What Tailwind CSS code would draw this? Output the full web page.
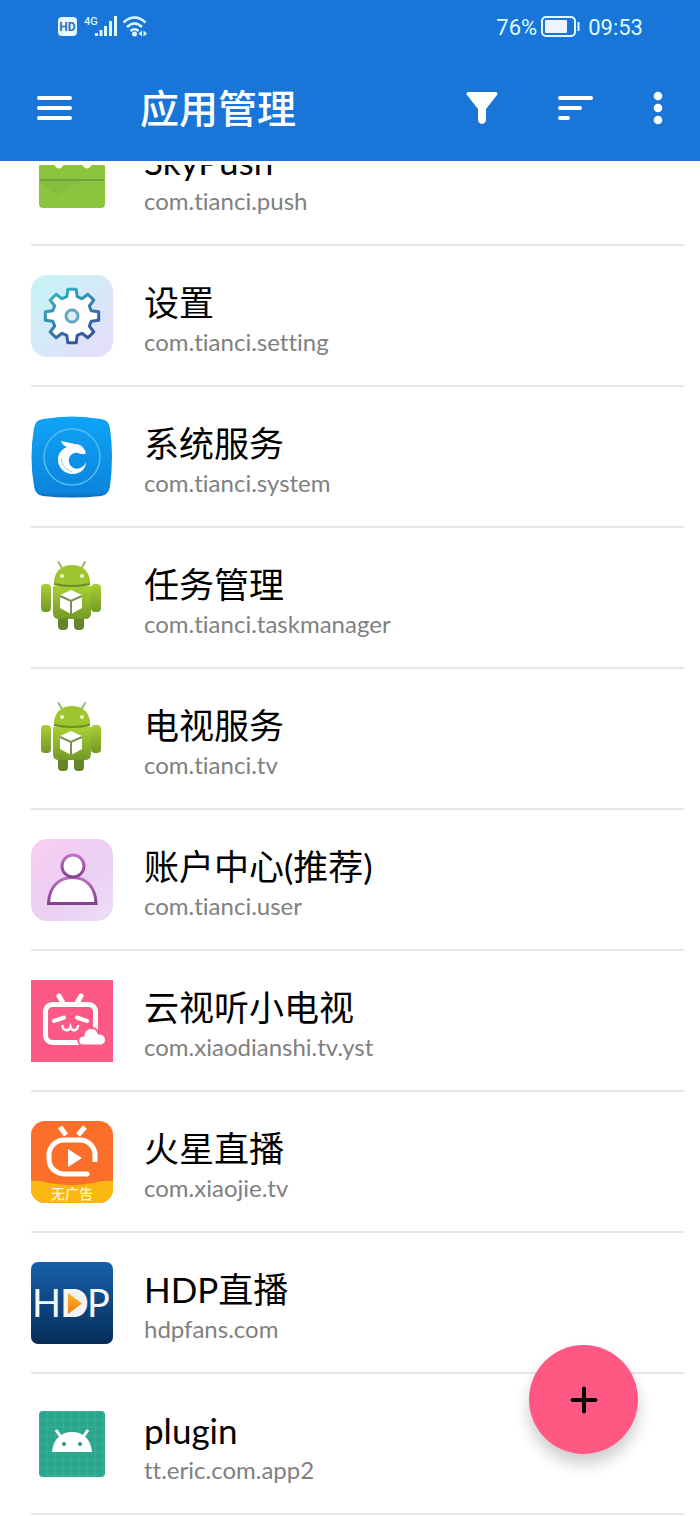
<!DOCTYPE html>
<html lang="zh-CN">
<head>
    <meta charset="UTF-8">
    <meta name="viewport" content="width=device-width, initial-scale=1.0">
    <title>应用管理</title>
    <script src="https://cdn.jsdelivr.net/npm/@tailwindcss/browser@4"></script>
</head>
<body class="relative flex flex-col h-screen overflow-hidden bg-white font-['Lato','Noto_Sans_CJK_SC',sans-serif] [font-variant-ligatures:none]">
    <!-- shared icon shapes -->
    <svg class="absolute size-0" aria-hidden="true">
        <defs>
            <linearGradient id="droidGreen" x1="0" y1="0" x2="0" y2="1"><stop offset="0" stop-color="#a9cf35"/><stop offset="1" stop-color="#739a26"/></linearGradient>
            <linearGradient id="settingBg" x1="0" y1="0" x2="1" y2="1"><stop offset="0" stop-color="#c4f5f6"/><stop offset="1" stop-color="#e8dcfa"/></linearGradient>
            <linearGradient id="settingLine" x1="0" y1="0" x2="0.6" y2="1"><stop offset="0" stop-color="#2cc0c4"/><stop offset="1" stop-color="#38519f"/></linearGradient>
            <linearGradient id="systemBg" x1="0" y1="0" x2="0" y2="1"><stop offset="0" stop-color="#0fa4f6"/><stop offset="0.94" stop-color="#0b84dd"/><stop offset="1" stop-color="#0866b4"/></linearGradient>
            <linearGradient id="userBg" x1="0" y1="0" x2="1" y2="1"><stop offset="0" stop-color="#f9cdf2"/><stop offset="0.6" stop-color="#ead1f2"/><stop offset="1" stop-color="#f0dcf8"/></linearGradient>
            <linearGradient id="userLine" x1="0" y1="0" x2="0" y2="1"><stop offset="0" stop-color="#c06fc4"/><stop offset="1" stop-color="#86408f"/></linearGradient>
            <linearGradient id="hdpBg" x1="0" y1="0" x2="0" y2="1"><stop offset="0" stop-color="#1660aa"/><stop offset="1" stop-color="#062c57"/></linearGradient>
            <linearGradient id="hdpPlay" x1="0" y1="0" x2="0" y2="1"><stop offset="0" stop-color="#fdb52c"/><stop offset="1" stop-color="#ef7d0c"/></linearGradient>
            <clipPath id="marsClip"><rect width="82" height="82" rx="14"/></clipPath>
            <pattern id="grid" width="8" height="8" patternUnits="userSpaceOnUse"><path d="M8 0H0V8" fill="none" stroke="#5cc3ae" stroke-opacity="0.5"/></pattern>
        </defs>
        <symbol id="droid" viewBox="0 0 82 82">
            <path d="M27.500 5l4 7M54 5l-4 7" stroke="#9db86b" stroke-width="2" stroke-linecap="round"/>
            <rect x="27" y="56" width="10" height="17" rx="4" fill="#64852a"/>
            <rect x="43" y="56" width="10" height="17" rx="4" fill="#64852a"/>
            <rect x="10" y="27" width="10" height="28" rx="4" fill="url(#droidGreen)"/>
            <rect x="60" y="27" width="10" height="28" rx="4" fill="url(#droidGreen)"/>
            <path d="M22 29H60V56Q60 62 54 62H28Q22 62 22 56Z" fill="url(#droidGreen)"/>
            <path d="M23 28C22 15 30 8 41 8S60 15 59 28Q41 32 23 28Z" fill="#9fc62f"/>
            <path d="M23 27Q41 31 59 27" fill="none" stroke="#6a8c20" stroke-width="2"/>
            <circle cx="31" cy="19" r="2" fill="#eef6cf"/><circle cx="51" cy="19" r="2" fill="#eef6cf"/>
            <path d="M40 33L51 38V51L40 57L29 51V38Z" fill="#fff"/>
            <path d="M29 39L40 44L51 39M40 44V57" fill="none" stroke="#7b8f55" stroke-width="2"/>
        </symbol>
    </svg>

    <header class="shrink-0 bg-[#1976d8] text-white">
        <div class="flex items-center justify-between h-[54px] pl-[57px] pr-[57px] font-['Roboto',sans-serif] text-[22px] text-[#dcfaff]">
            <div class="flex items-center">
                <svg width="92" height="24" viewBox="0 0 92 24" role="img" aria-label="HD 4G Wi-Fi">
                    <rect x="1" y="2" width="19" height="19" rx="4" fill="#e4fbff"/>
                    <text x="10.500" y="16" text-anchor="middle" font-size="12" font-weight="700" fill="#2a6fb8">HD</text>
                    <text x="27" y="10" font-size="11" font-weight="500" fill="currentColor">4G</text>
                    <path d="M39.500 18v3M44 15v6M48.500 11v10M53.500 6v15M58.500 1v20" stroke="currentColor" stroke-width="3"/>
                    <g fill="none" stroke="currentColor" stroke-width="2.600">
                        <path d="M66.500 7.500Q77.500-2.500 88.500 7.500M70 12Q77.500 5 85 12M73.500 16Q77.500 12.500 81.500 16"/>
                    </g>
                    <circle cx="77.500" cy="19" r="2.500" fill="currentColor"/>
                    <path d="M85 15.500v6l-3.500-3zM86.500 15.500v6l3.500-3z" fill="currentColor"/>
                </svg>
            </div>
            <div class="flex items-center">
                <span>76%</span>
                <svg class="ml-1 mr-2" width="39" height="22" viewBox="0 0 39 22" role="img" aria-label="电池">
                    <rect x="1" y="1" width="33" height="19" rx="4" fill="none" stroke="currentColor" stroke-width="2"/>
                    <rect x="4" y="4" width="22" height="13" rx="1" fill="#f3f2ff"/>
                    <path d="M37.500 6v9" stroke="currentColor" stroke-width="2"/>
                </svg>
                <span>09:53</span>
            </div>
        </div>
        <div class="flex items-center h-[107px] pl-[37px] pr-[37px]">
            <button type="button" aria-label="菜单">
                <svg class="block" width="36" height="34" viewBox="0 0 36 34" fill="none" stroke="currentColor" stroke-width="4" stroke-linecap="round"><path d="M2 7H33M2 17H33M2 27H33"/></svg>
            </button>
            <h1 class="flex-1 ml-[67px] text-[39px] leading-[48px] font-medium">应用管理</h1>
            <div class="flex items-center gap-[60px]">
                <button type="button" aria-label="筛选">
                    <svg class="block" width="32" height="34" viewBox="0 0 32 34" fill="currentColor"><path d="M2 1H30Q32.500 2 31 4L20 18V29Q19.500 32.500 16 33Q12.500 32.500 12 29V18L1 4Q-.5 2 2 1Z"/></svg>
                </button>
                <button type="button" aria-label="排序">
                    <svg class="block" width="35" height="34" viewBox="0 0 35 34" fill="none" stroke="currentColor" stroke-width="4" stroke-linecap="round"><path d="M2 7H33M2 17H22M2 27H10"/></svg>
                </button>
                <button type="button" aria-label="更多">
                    <svg class="block" width="10" height="34" viewBox="0 0 10 34" fill="currentColor"><circle cx="5" cy="5" r="4.300"/><circle cx="5" cy="17" r="4.300"/><circle cx="5" cy="29" r="4.300"/></svg>
                </button>
            </div>
        </div>
    </header>

    <!-- list is scrolled to its end, so rows run off the top -->
    <main class="flex-1 min-h-0 flex flex-col justify-end overflow-hidden mt-1 pb-px">
        <ul class="pl-[31px] pr-4">
            <li class="border-b-2 border-[#e6e6e6]">
                <a href="#" class="flex items-start gap-[31px] h-[139px] pt-[29px]">
                    <svg class="shrink-0" width="82" height="82" viewBox="0 0 82 82">
                        <path d="M8 32L12 22H22V29Q28 40 34 29V22H50V29Q56 40 62 29V22H70L74 32V70Q74 74 70 74H12Q8 74 8 70Z" fill="#8bc53f"/>
                        <path d="M9 47H50L26 62Z" fill="#85bd3e"/>
                        <path d="M9 46H73" stroke="#72a33a" stroke-width="2"/>
                    </svg>
                    <div class="pt-[5px]">
                        <h2 class="text-[35px] leading-[44px] text-black">SkyPush</h2>
                        <p class="text-[24px] leading-[36px] text-[#808080]">com.tianci.push</p>
                    </div>
                </a>
            </li>
            <li class="border-b-2 border-[#e6e6e6]">
                <a href="#" class="flex items-start gap-[31px] h-[139px] pt-[29px]">
                    <svg class="shrink-0" width="82" height="82" viewBox="0 0 82 82">
                        <rect width="82" height="82" rx="16" fill="url(#settingBg)"/>
                        <path transform="translate(41 41)" d="M-5.200-19.300L-4.200-26.700H4.200L5.200-19.300L10-17.300L15.900-21.800L21.800-15.900L17.300-10L19.300-5.200L26.700-4.200V4.200L19.300 5.200L17.300 10L21.800 15.900L15.900 21.800L10 17.300L5.200 19.300L4.200 26.700H-4.200L-5.200 19.300L-10 17.300L-15.900 21.800L-21.800 15.900L-17.300 10L-19.300 5.200L-26.700 4.200V-4.200L-19.300-5.200L-17.300-10L-21.800-15.900L-15.900-21.800L-10-17.300Z" fill="#fff" stroke="url(#settingLine)" stroke-width="3" stroke-linejoin="round"/>
                        <circle cx="41" cy="41" r="6" fill="#dfeefa" stroke="#5fa9bd" stroke-width="3"/>
                    </svg>
                    <div class="pt-[5px]">
                        <h2 class="text-[35px] leading-[44px] text-black">设置</h2>
                        <p class="text-[24px] leading-[36px] text-[#808080]">com.tianci.setting</p>
                    </div>
                </a>
            </li>
            <li class="border-b-2 border-[#e6e6e6]">
                <a href="#" class="flex items-start gap-[31px] h-[139px] pt-[29px]">
                    <svg class="shrink-0" width="82" height="82" viewBox="0 0 82 82">
                        <path d="M12 3Q41-2 70 3Q78 4 79 12Q83 41 79 70Q78 79 70 80Q41 83 12 80Q4 79 3 70Q-2 41 3 12Q4 4 12 3Z" fill="url(#systemBg)"/>
                        <circle cx="41" cy="41" r="28" fill="none" stroke="#52bdf6" stroke-width="1.500"/>
                        <path d="M30 25L44 28C49 28 53 31 55 37C53 39 50 38 47 37C41 36 37 41 38 46C39 51 44 54 49 52C52 51 54 49 55 46C55 53 49 58 42 58C33 58 27 51 27 44C27 37 31 33 36 31C33 30 31 28 30 25Z" fill="#fff"/>
                        <path d="M30 42Q31 52 41 56" fill="none" stroke="#8fd2f7"/>
                    </svg>
                    <div class="pt-[5px]">
                        <h2 class="text-[35px] leading-[44px] text-black">系统服务</h2>
                        <p class="text-[24px] leading-[36px] text-[#808080]">com.tianci.system</p>
                    </div>
                </a>
            </li>
            <li class="border-b-2 border-[#e6e6e6]">
                <a href="#" class="flex items-start gap-[31px] h-[139px] pt-[29px]">
                    <svg class="shrink-0" width="82" height="82"><use href="#droid"/></svg>
                    <div class="pt-[5px]">
                        <h2 class="text-[35px] leading-[44px] text-black">任务管理</h2>
                        <p class="text-[24px] leading-[36px] text-[#808080]">com.tianci.taskmanager</p>
                    </div>
                </a>
            </li>
            <li class="border-b-2 border-[#e6e6e6]">
                <a href="#" class="flex items-start gap-[31px] h-[139px] pt-[29px]">
                    <svg class="shrink-0" width="82" height="82"><use href="#droid"/></svg>
                    <div class="pt-[5px]">
                        <h2 class="text-[35px] leading-[44px] text-black">电视服务</h2>
                        <p class="text-[24px] leading-[36px] text-[#808080]">com.tianci.tv</p>
                    </div>
                </a>
            </li>
            <li class="border-b-2 border-[#e6e6e6]">
                <a href="#" class="flex items-start gap-[31px] h-[139px] pt-[29px]">
                    <svg class="shrink-0" width="82" height="82" viewBox="0 0 82 82">
                        <rect width="82" height="82" rx="16" fill="url(#userBg)"/>
                        <g fill="#fff" stroke="url(#userLine)" stroke-width="3">
                            <path d="M17.500 64.500C18 48 28 38.500 41.500 38.500S64.500 48 65 64.500Z"/>
                            <circle cx="42" cy="27" r="11"/>
                        </g>
                    </svg>
                    <div class="pt-[5px]">
                        <h2 class="text-[35px] leading-[44px] text-black">账户中心(推荐)</h2>
                        <p class="text-[24px] leading-[36px] text-[#808080]">com.tianci.user</p>
                    </div>
                </a>
            </li>
            <li class="border-b-2 border-[#e6e6e6]">
                <a href="#" class="flex items-start gap-[31px] h-[139px] pt-[29px]">
                    <svg class="shrink-0" width="82" height="82" viewBox="0 0 82 82">
                        <rect width="82" height="82" fill="#fc5a85"/>
                        <g fill="none" stroke="#fff" stroke-linecap="round">
                            <rect x="14.500" y="24.500" width="50" height="38" rx="7" stroke-width="5"/>
                            <path d="M28 16L32 23M50 16L46 23" stroke-width="5"/>
                            <path d="M23 41L33 37.500M46 37.500L56 41" stroke-width="4"/>
                            <path d="M31.500 46C32 51 38 52 39.500 47C41 52 46.500 51 47 46" stroke-width="2.500"/>
                        </g>
                        <path d="M53 65.500C45.500 65.500 45.500 56 52.500 55.500C53.500 46 65.500 45.500 67.500 53.500C77 53.500 77.500 65.500 69 65.500Z" fill="#fff" stroke="#fc5a85" stroke-width="2"/>
                    </svg>
                    <div class="pt-[5px]">
                        <h2 class="text-[35px] leading-[44px] text-black">云视听小电视</h2>
                        <p class="text-[24px] leading-[36px] text-[#808080]">com.xiaodianshi.tv.yst</p>
                    </div>
                </a>
            </li>
            <li class="border-b-2 border-[#e6e6e6]">
                <a href="#" class="flex items-start gap-[31px] h-[139px] pt-[29px]">
                    <svg class="shrink-0" width="82" height="82" viewBox="0 0 82 82">
                        <g clip-path="url(#marsClip)">
                            <rect width="82" height="82" fill="#fb6f2b"/>
                            <path d="M0 60Q10 59 18 62Q41 66 62 62Q72 59 82 60V82H0Z" fill="#fbb60f"/>
                        </g>
                        <g fill="none" stroke="#fff" stroke-width="5">
                            <path d="M29 6L35 14M54 6L47 14"/>
                            <path d="M64 41V34A15 15 0 0 0 49 19H33A15 15 0 0 0 18 34V38A15 15 0 0 0 33 53H57"/>
                        </g>
                        <path d="M57 50L59 54L55 56Z" fill="#fff"/>
                        <path d="M37 28V46L51 37Z" fill="#fff"/>
                        <text x="41" y="78" text-anchor="middle" font-size="14" font-weight="500" fill="#fff6d8">无广告</text>
                    </svg>
                    <div class="pt-[5px]">
                        <h2 class="text-[35px] leading-[44px] text-black">火星直播</h2>
                        <p class="text-[24px] leading-[36px] text-[#808080]">com.xiaojie.tv</p>
                    </div>
                </a>
            </li>
            <li class="border-b-2 border-[#e6e6e6]">
                <a href="#" class="flex items-start gap-[31px] h-[139px] pt-[29px]">
                    <svg class="shrink-0" width="82" height="82" viewBox="0 0 82 82">
                        <rect width="82" height="82" rx="7" fill="url(#hdpBg)"/>
                        <path d="M34 29H41Q53 30 53 41.500T41 54H34Z" fill="#eef3fa"/>
                        <g font-size="38" fill="#f4f8fd">
                            <text x="1" y="55">H</text>
                            <text x="29" y="55">D</text>
                            <text x="56" y="55">P</text>
                        </g>
                        <path d="M37 31V52L51 41.500Z" fill="url(#hdpPlay)"/>
                    </svg>
                    <div class="pt-[5px]">
                        <h2 class="text-[35px] leading-[44px] text-black">HDP直播</h2>
                        <p class="text-[24px] leading-[36px] text-[#808080]">hdpfans.com</p>
                    </div>
                </a>
            </li>
            <li class="border-b-2 border-[#e6e6e6]">
                <a href="#" class="flex items-start gap-[31px] h-[139px] pt-[29px]">
                    <svg class="shrink-0" width="82" height="82" viewBox="0 0 82 82">
                        <rect x="8" y="8" width="66" height="66" rx="4" fill="#2ba68f"/>
                        <rect x="8" y="8" width="66" height="66" rx="4" fill="url(#grid)"/>
                        <path d="M25 27L30 34M57 27L52 34" stroke="#fff" stroke-width="3"/>
                        <path d="M21 49C22 36 30 29 41 29S60 36 61 49Z" fill="#fff"/>
                        <circle cx="33" cy="41" r="2" fill="#2f8f86"/><circle cx="49" cy="41" r="2" fill="#2f8f86"/>
                    </svg>
                    <div class="pt-[5px]">
                        <h2 class="text-[35px] leading-[44px] text-black">plugin</h2>
                        <p class="text-[24px] leading-[36px] text-[#808080]">tt.eric.com.app2</p>
                    </div>
                </a>
            </li>
        </ul>
    </main>

    <button type="button" aria-label="添加" class="absolute right-[62px] bottom-[62px] flex items-center justify-center size-[109px] rounded-full bg-[#ff5983] text-black shadow-[0_10px_16px_rgba(0,0,0,0.2)]">
        <svg width="28" height="28" viewBox="0 0 28 28" fill="none" stroke="currentColor" stroke-width="4" stroke-linecap="round"><path d="M14 2.500V25.500M2.500 14H25.500"/></svg>
    </button>
</body>
</html>
